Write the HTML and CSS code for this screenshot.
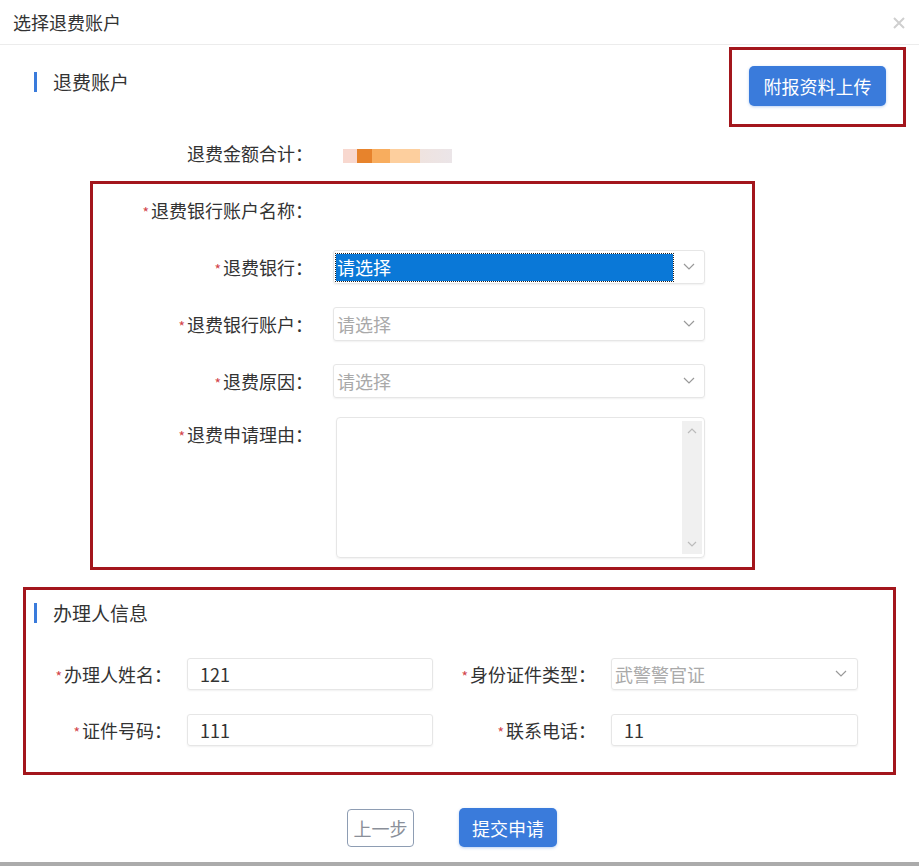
FILE: index.html
```html
<!DOCTYPE html>
<html lang="zh-CN">

<head>
    <meta charset="UTF-8">
    <meta name="viewport" content="width=device-width, initial-scale=1.0">
    <title>选择退费账户</title>
    <link rel="stylesheet" href="styles.css">
</head>

<body>
    <div class="dialog">
        <div class="dialog-header">
            <span class="dialog-title">选择退费账户</span>
            <svg class="close-icon" width="12" height="12" viewBox="0 0 12 12">
                <path d="M1 1 L11 11 M11 1 L1 11" stroke="#cfcfcf" stroke-width="2" fill="none" />
            </svg>
        </div>

        <div class="top-row">
            <div class="section-title">退费账户</div>
            <div class="annot annot-upload">
                <button class="btn btn-primary btn-upload">附报资料上传</button>
            </div>
        </div>

        <div class="amount-row">
            <div class="amount-label">退费金额合计：</div>
            <div class="amount-blur"></div>
        </div>

        <div class="annot annot-account">
            <div class="form-row">
                <label class="form-label"><span class="req">*</span>退费银行账户名称：</label>
            </div>
            <div class="form-row">
                <label class="form-label"><span class="req">*</span>退费银行：</label>
                <div class="select">
                    <span class="select-value focused">请选择</span>
                    <svg class="chevron" width="12" height="8" viewBox="0 0 12 8">
                        <polyline points="1,1 6,6 11,1" fill="none" stroke="#999" stroke-width="1.2" />
                    </svg>
                </div>
            </div>
            <div class="form-row">
                <label class="form-label"><span class="req">*</span>退费银行账户：</label>
                <div class="select">
                    <span class="select-value placeholder">请选择</span>
                    <svg class="chevron" width="12" height="8" viewBox="0 0 12 8">
                        <polyline points="1,1 6,6 11,1" fill="none" stroke="#999" stroke-width="1.2" />
                    </svg>
                </div>
            </div>
            <div class="form-row">
                <label class="form-label"><span class="req">*</span>退费原因：</label>
                <div class="select">
                    <span class="select-value placeholder">请选择</span>
                    <svg class="chevron" width="12" height="8" viewBox="0 0 12 8">
                        <polyline points="1,1 6,6 11,1" fill="none" stroke="#999" stroke-width="1.2" />
                    </svg>
                </div>
            </div>
            <div class="form-row row-textarea">
                <label class="form-label"><span class="req">*</span>退费申请理由：</label>
                <div class="textarea">
                    <div class="scrollbar">
                        <svg width="10" height="6" viewBox="0 0 10 6">
                            <polyline points="1,5 5,1 9,5" fill="none" stroke="#bbb" stroke-width="1.2" />
                        </svg>
                        <svg width="10" height="6" viewBox="0 0 10 6">
                            <polyline points="1,1 5,5 9,1" fill="none" stroke="#bbb" stroke-width="1.2" />
                        </svg>
                    </div>
                </div>
            </div>
        </div>

        <div class="annot annot-agent">
            <div class="section-title">办理人信息</div>
            <div class="agent-row">
                <div class="field">
                    <label class="field-label label-left"><span class="req">*</span>办理人姓名：</label>
                    <div class="input input-left">121</div>
                </div>
                <div class="field">
                    <label class="field-label label-right"><span class="req">*</span>身份证件类型：</label>
                    <div class="input input-right select-like">
                        <span class="placeholder">武警警官证</span>
                        <svg class="chevron" width="12" height="8" viewBox="0 0 12 8">
                            <polyline points="1,1 6,6 11,1" fill="none" stroke="#999" stroke-width="1.2" />
                        </svg>
                    </div>
                </div>
            </div>
            <div class="agent-row">
                <div class="field">
                    <label class="field-label label-left"><span class="req">*</span>证件号码：</label>
                    <div class="input input-left">111</div>
                </div>
                <div class="field">
                    <label class="field-label label-right"><span class="req">*</span>联系电话：</label>
                    <div class="input input-right">11</div>
                </div>
            </div>
        </div>

        <div class="footer">
            <button class="btn btn-default">上一步</button>
            <button class="btn btn-primary btn-submit">提交申请</button>
        </div>
    </div>
</body>

</html>
```

FILE: styles.css
```css
body {
    margin: 0;
    background: #fff;
    font-family: "Microsoft YaHei", "Noto Sans CJK SC", "Noto Sans", sans-serif;
    color: #333;
}

.dialog {
    height: 866px;
    box-sizing: border-box;
    border-bottom: 4px solid #ababab;
    overflow: hidden;
}

.dialog-header {
    height: 44px;
    border-bottom: 1px solid #ececec;
    display: flex;
    align-items: center;
    justify-content: space-between;
    padding: 0 14px 0 13px;
}

.dialog-title {
    font-size: 18px;
    color: #333;
}

.close-icon {
    margin-top: 2px;
}

.top-row {
    display: flex;
    justify-content: space-between;
    align-items: flex-start;
    padding: 2px 13px 0 34px;
}

.section-title {
    border-left: 3px solid #3a7bdb;
    padding-left: 16px;
    font-size: 19px;
    line-height: 20px;
    height: 20px;
    color: #333;
}

.top-row .section-title {
    margin-top: 25px;
}

.annot {
    border: 3px solid #a3161c;
    box-sizing: border-box;
}

.annot-upload {
    width: 177px;
    height: 80px;
    padding: 16px 0 0 17px;
}

.btn {
    font-family: inherit;
    font-size: 18px;
    border-radius: 5px;
    cursor: pointer;
    padding: 0;
}

.btn-primary {
    background: #3a7bdb;
    color: #fff;
    border: none;
    box-shadow: 0 1px 3px rgba(58, 123, 219, 0.35);
}

.btn-upload {
    width: 137px;
    height: 40px;
}

.amount-row {
    display: flex;
    align-items: center;
    height: 34px;
    margin-top: 9px;
}

.amount-label {
    width: 313px;
    text-align: right;
    font-size: 18px;
}

.amount-blur {
    margin-left: 30px;
    margin-top: 6px;
    width: 109px;
    height: 14px;
    background: linear-gradient(90deg,
            #f8d8cf 0, #f8d8cf 14px,
            #e7832c 14px, #e7832c 29px,
            #f8ad5e 29px, #f8ad5e 47px,
            #fdcf9e 47px, #fdcf9e 77px,
            #efe3df 77px, #ebe5e8 109px);
}

.annot-account {
    margin: 11px 0 0 90px;
    width: 665px;
    padding: 9px 0;
}

.form-row {
    display: flex;
    align-items: flex-start;
    height: 34px;
}

.form-row + .form-row {
    margin-top: 23px;
}

.form-row.row-textarea {
    margin-top: 19px;
    height: 141px;
}

.form-label {
    width: 220px;
    height: 34px;
    text-align: right;
    font-size: 18px;
    line-height: 34px;
    color: #333;
}

.req {
    color: #d2454b;
    font-size: 14px;
    line-height: 1;
    margin-right: 2px;
}

.select {
    margin-left: 20px;
    width: 372px;
    height: 34px;
    box-sizing: border-box;
    border: 1px solid #e6e6e6;
    border-radius: 3px;
    box-shadow: 0 1px 2px rgba(0, 0, 0, 0.06);
    display: flex;
    align-items: center;
    padding: 0 9px 0 2px;
    font-size: 18px;
}

.select-value {
    flex: 1;
    height: 27px;
    line-height: 27px;
    padding-left: 1px;
}

.select-value.focused {
    background: #0a78d7;
    color: #fff;
    outline: 1px dotted #222;
    margin-right: 10px;
}

.placeholder {
    color: #a9a9a9;
}

.chevron {
    flex-shrink: 0;
}

.textarea {
    margin-left: 23px;
    width: 369px;
    height: 141px;
    box-sizing: border-box;
    border: 1px solid #e6e6e6;
    border-radius: 4px;
    box-shadow: 0 1px 2px rgba(0, 0, 0, 0.06);
    display: flex;
    justify-content: flex-end;
    padding: 3px 2px 3px 0;
}

.scrollbar {
    width: 20px;
    background: #f0f0f0;
    display: flex;
    flex-direction: column;
    justify-content: space-between;
    align-items: center;
    padding: 7px 0;
}

.annot-agent {
    margin: 17px 0 0 23px;
    width: 873px;
    padding: 13px 0 26px 0;
}

.annot-agent .section-title {
    margin-left: 8px;
}

.agent-row {
    display: flex;
    align-items: center;
    height: 32px;
    margin-top: 24px;
}

.annot-agent .section-title + .agent-row {
    margin-top: 35px;
}

.field {
    display: flex;
    align-items: center;
}

.field-label {
    text-align: right;
    font-size: 18px;
    line-height: 32px;
    color: #333;
}

.label-left {
    width: 146px;
}

.label-right {
    width: 163px;
}

.input {
    margin-left: 15px;
    height: 32px;
    box-sizing: border-box;
    border: 1px solid #e6e6e6;
    border-radius: 3px;
    box-shadow: 0 1px 2px rgba(0, 0, 0, 0.06);
    display: flex;
    align-items: center;
    padding: 0 12px;
    font-size: 18px;
    color: #333;
}

.input-left {
    width: 246px;
}

.input-right {
    width: 247px;
}

.select-like {
    justify-content: space-between;
    padding: 0 10px 0 3px;
}

.footer {
    margin-top: 33px;
    display: flex;
    justify-content: center;
    align-items: center;
    gap: 45px;
    padding-right: 15px;
}

.btn-default {
    width: 67px;
    height: 38px;
    background: #fff;
    color: #8a8f99;
    border: 1px solid #8e9db3;
    border-radius: 4px;
}

.btn-submit {
    width: 98px;
    height: 39px;
}
```
